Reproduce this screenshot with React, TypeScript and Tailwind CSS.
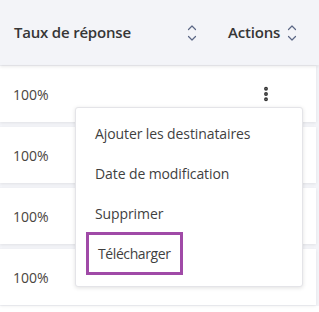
import { MoreVertical } from "lucide-react";

const SortIcon = () => (
  <svg width="10" height="16" viewBox="0 0 10 16" fill="none" stroke="#5b6785" strokeWidth="1.2" strokeLinecap="round" strokeLinejoin="round">
    <path d="M1.5 4.5 L5 1 L8.5 4.5" />
    <path d="M1.5 11.5 L5 15 L8.5 11.5" />
  </svg>
);

const menuItems = ["Ajouter les destinataires", "Date de modification", "Supprimer", "Télécharger"];

export default function App() {
  return (
    <div className="relative w-[319px] h-[312px] bg-white overflow-hidden text-[#363636]" style={{ fontFamily: '"Open Sans", "Noto Sans", sans-serif' }}>
      <div className="bg-[#f3f4f8] pb-[1px]">
        {/* Header */}
        <div className="h-[65px] flex items-center shadow-[0_2px_3px_rgba(0,0,0,0.08)] relative z-10">
          <div className="w-[224px] pl-[14px] pr-[27px] flex items-center justify-between">
            <span className="text-[15px] font-semibold tracking-[-0.2px]">Taux de réponse</span>
            <SortIcon />
          </div>
          <div className="flex items-center gap-[7px] pl-[4px]">
            <span className="text-[15px] font-semibold tracking-[-0.2px]">Actions</span>
            <SortIcon />
          </div>
        </div>

        {/* Rows */}
        <div className="flex flex-col gap-[5px] pr-[3px] pt-[1px]">
          {[0, 1, 2, 3].map((i) => (
            <div key={i} className="h-[56px] bg-white flex items-center shadow-[0_1px_3px_rgba(0,0,0,0.08)]">
              <span className="pl-[13px] text-[14px] text-[#4a4540] w-[262px]">100%</span>
              {i === 0 && <MoreVertical size={18} strokeWidth={3.2} className="text-[#333] -ml-[5px]" />}
            </div>
          ))}
        </div>
      </div>

      {/* Dropdown menu */}
      <div className="absolute left-[75px] top-[107px] w-[228px] h-[180px] bg-white rounded-[3px] border border-[#e4e4e8] shadow-[0_1px_4px_rgba(0,0,0,0.12)] py-[5px]">
        {menuItems.map((item, i) => (
          <div key={item} className="h-[40px] flex items-center pl-[10px]">
            <span
              className={`text-[14px] text-[#3f3f3f] tracking-[-0.1px] px-[9px] py-[8px] ${
                i === 3 ? "border-[3px] border-[#a04aa7] px-[6px] py-[7px] tracking-[-0.4px]" : ""
              }`}
            >
              {item}
            </span>
          </div>
        ))}
      </div>
    </div>
  );
}
